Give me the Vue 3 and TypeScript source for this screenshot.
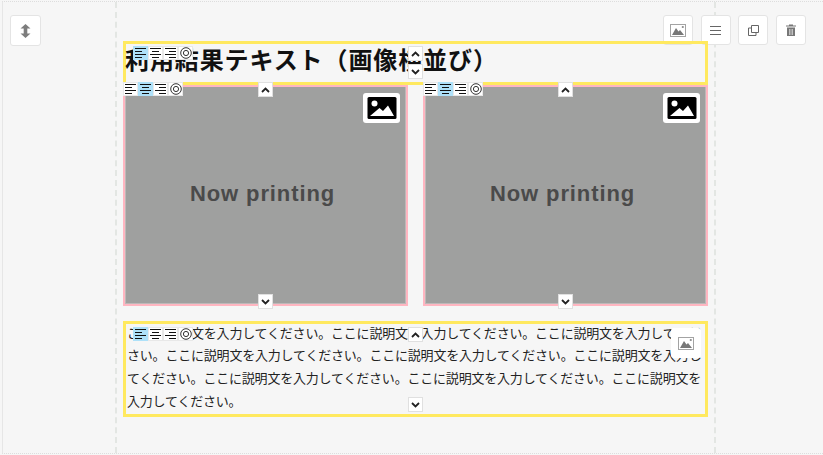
<script setup lang="ts">
const aligns = ['left', 'center', 'right', 'spiral'] as const
const sideTools = ['image', 'menu', 'copy', 'trash'] as const
const bars: Record<string, number[][]> = {
  left: [[1, 11], [1, 7], [1, 11], [1, 7]],
  center: [[1, 11], [3, 7], [1, 11], [3, 7]],
  right: [[1, 11], [5, 7], [1, 11], [5, 7]],
}
const body = 'ここに説明文を入力してください。'.repeat(9)
</script>

<template>
  <div class="page">
    <div class="canvas">
      <button class="tool move-tool" type="button" aria-label="move">
        <svg width="11" height="14" viewBox="0 0 11 14"><path d="M5.500 0 .5 4.500h3.200v5H.5L5.500 14l5-4.500H7.300v-5h3.200z" fill="#7d7d7d" /></svg>
      </button>

      <div class="side-tools">
        <button v-for="t in sideTools" :key="t" class="tool" type="button" :aria-label="t">
          <svg v-if="t === 'image'" width="16" height="13" viewBox="0 0 16 13">
            <rect x="0.500" y="0.500" width="15" height="12" fill="none" stroke="#a3a3a3" />
            <path d="M2 11 6 4l2.500 3.500L10 6l4 5z" fill="#777" /><circle cx="12.800" cy="3" r="1.100" fill="#888" />
          </svg>
          <svg v-else-if="t === 'menu'" width="11" height="9" viewBox="0 0 11 9"><path d="M0 .5h11M0 4.500h11M0 8.500h11" stroke="#666" /></svg>
          <svg v-else-if="t === 'copy'" width="11" height="11" viewBox="0 0 11 11">
            <path d="M3.500.5h7v7h-7z" fill="none" stroke="#666" /><path d="M3 3H.5v7.500H8V8" fill="none" stroke="#666" />
          </svg>
          <svg v-else width="10" height="12" viewBox="0 0 10 12">
            <path d="M0 1.500h10v1H0zM3 .5h4v1H3zM1 3.500h8V12H1z" fill="#777" /><path d="M3.500 5v6M5 5v6M6.500 5v6" stroke="#f5f5f5" stroke-width=".6" />
          </svg>
        </button>
      </div>

      <div class="guide">
        <section class="block title-block">
          <h1 class="title">利用結果テキスト（画像横並び）</h1>
          <div class="aligns title-aligns">
            <span v-for="(a, i) in aligns" :key="a" class="align" :class="{ on: i === 0 }">
              <svg v-if="a !== 'spiral'" width="12" height="10" viewBox="0 0 12 10">
                <rect v-for="(b, r) in bars[a]" :key="r" :x="b[0] - 1" :y="r * 3" :width="b[1]" height="1" fill="#111" />
              </svg>
              <svg v-else width="12" height="12" viewBox="0 0 12 12"><circle cx="6" cy="6" r="5.300" fill="none" stroke="#333" /><circle cx="6" cy="6" r="2.600" fill="none" stroke="#333" /></svg>
            </span>
          </div>
          <span class="arrow title-up"><svg width="9" height="6" viewBox="0 0 9 6"><path d="M1 5l3.500-3.500L8 5" fill="none" stroke="#222" stroke-width="1.800" /></svg></span>
          <span class="arrow title-down"><svg width="9" height="6" viewBox="0 0 9 6"><path d="M1 1l3.500 3.500L8 1" fill="none" stroke="#222" stroke-width="1.800" /></svg></span>
        </section>

        <div class="images">
          <figure v-for="n in 2" :key="n" class="image">
            <div class="placeholder">Now printing</div>
            <div class="aligns image-aligns">
              <span v-for="(a, i) in aligns" :key="a" class="align" :class="{ on: i === 1 }">
                <svg v-if="a !== 'spiral'" width="12" height="10" viewBox="0 0 12 10">
                  <rect v-for="(b, r) in bars[a]" :key="r" :x="b[0] - 1" :y="r * 3" :width="b[1]" height="1" fill="#111" />
                </svg>
                <svg v-else width="12" height="12" viewBox="0 0 12 12"><circle cx="6" cy="6" r="5.300" fill="none" stroke="#333" /><circle cx="6" cy="6" r="2.600" fill="none" stroke="#333" /></svg>
              </span>
            </div>
            <span class="arrow image-up"><svg width="9" height="6" viewBox="0 0 9 6"><path d="M1 5l3.500-3.500L8 5" fill="none" stroke="#222" stroke-width="1.800" /></svg></span>
            <span class="arrow image-down"><svg width="9" height="6" viewBox="0 0 9 6"><path d="M1 1l3.500 3.500L8 1" fill="none" stroke="#222" stroke-width="1.800" /></svg></span>
            <span class="swap">
              <svg width="30" height="24" viewBox="0 0 30 24">
                <rect x="0.500" y="1" width="29" height="22" rx="1.500" fill="#000" />
                <circle cx="7.500" cy="7.500" r="3" fill="#fff" />
                <path d="M3 20 12.500 12l3.500 3 5-5.500L27 20z" fill="#fff" />
              </svg>
            </span>
          </figure>
        </div>

        <section class="block text-block">
          <p class="body">{{ body }}</p>
          <div class="aligns text-aligns">
            <span v-for="(a, i) in aligns" :key="a" class="align" :class="{ on: i === 0 }">
              <svg v-if="a !== 'spiral'" width="12" height="10" viewBox="0 0 12 10">
                <rect v-for="(b, r) in bars[a]" :key="r" :x="b[0] - 1" :y="r * 3" :width="b[1]" height="1" fill="#111" />
              </svg>
              <svg v-else width="12" height="12" viewBox="0 0 12 12"><circle cx="6" cy="6" r="5.300" fill="none" stroke="#333" /><circle cx="6" cy="6" r="2.600" fill="none" stroke="#333" /></svg>
            </span>
          </div>
          <span class="arrow text-up"><svg width="9" height="6" viewBox="0 0 9 6"><path d="M1 5l3.500-3.500L8 5" fill="none" stroke="#222" stroke-width="1.800" /></svg></span>
          <span class="arrow text-down"><svg width="9" height="6" viewBox="0 0 9 6"><path d="M1 1l3.500 3.500L8 1" fill="none" stroke="#222" stroke-width="1.800" /></svg></span>
          <button class="tool text-image" type="button" aria-label="image">
            <svg width="16" height="13" viewBox="0 0 16 13">
              <rect x="0.500" y="0.500" width="15" height="12" fill="none" stroke="#a3a3a3" />
              <path d="M2 11 6 4l2.500 3.500L10 6l4 5z" fill="#777" /><circle cx="12.800" cy="3" r="1.100" fill="#888" />
            </svg>
          </button>
        </section>
      </div>
    </div>
  </div>
</template>

<style scoped>
.page {
  box-sizing: border-box;
  width: 823px;
  height: 455px;
  padding: 1px 0 0 2px;
  background: #f6f6f6;
  font-family: "Liberation Sans", "Noto Sans CJK JP", sans-serif;
  overflow: hidden;
}
.canvas {
  position: relative;
  box-sizing: border-box;
  width: 821px;
  height: 453px;
  padding: 0 0 0 112px;
  background: #f6f6f6;
  border-left: 1px solid #e6e6e6;
  border-top: 1px dotted #ddd;
  border-bottom: 1px dotted #ddd;
}
.guide {
  box-sizing: border-box;
  width: 601px;
  height: 100%;
  padding: 39px 6px 0 6px;
  border-left: 2px dashed #e3e6e3;
  border-right: 2px dashed #e3e6e3;
}
.tool {
  display: flex;
  align-items: center;
  justify-content: center;
  box-sizing: border-box;
  width: 30px;
  height: 30px;
  padding: 0;
  background: #fff;
  border: 1px solid #e4e4e4;
  border-radius: 3px;
}
.move-tool {
  position: absolute;
  top: 13px;
  left: 7px;
  width: 31px;
  height: 31px;
}
.side-tools {
  position: absolute;
  top: 13px;
  left: 660px;
  display: flex;
  gap: 7.5px;
}
.block {
  position: relative;
  box-sizing: border-box;
  width: 585px;
  border: 3px solid #ffe95f;
}
.title-block {
  height: 44px;
}
.title {
  margin: 0 0 0 -1px;
  padding: 1px 0 0 0;
  font-size: 24px;
  line-height: 32px;
  font-weight: 700;
  color: #111;
  letter-spacing: 0.9px;
  white-space: nowrap;
}
.images {
  display: flex;
  gap: 15px;
}
.image {
  position: relative;
  box-sizing: border-box;
  width: 285px;
  height: 221px;
  margin: 0;
  border: 2px solid #ffb6c1;
}
.placeholder {
  display: flex;
  align-items: center;
  justify-content: center;
  box-sizing: border-box;
  height: 100%;
  padding: 0 6px 2px 0;
  background: #9fa09f;
  border: 1px solid #bdb9b9;
  border-top: 0;
  color: #4a4a4a;
  font-size: 22px;
  font-weight: 700;
  letter-spacing: 0.9px;
}
.text-block {
  height: 96px;
  margin-top: 15px;
}
.body {
  margin: -1.500px 0 0;
  padding: 0 0 0 1px;
  font-size: 13px;
  line-height: 22.800px;
  letter-spacing: -0.2px;
  color: #222;
}
.aligns {
  position: absolute;
  display: flex;
}
.align {
  display: flex;
  align-items: center;
  justify-content: center;
  box-sizing: border-box;
  width: 15px;
  height: 14px;
  background: #fff;
  border: 1px solid #e8e8e8;
}
.align.on {
  background: #aee1f9;
  border-color: #aee1f9;
}
.title-aligns {
  top: 2px;
  left: 7px;
}
.image-aligns {
  top: -5px;
  left: -2px;
}
.text-aligns {
  top: 3px;
  left: 7px;
}
.arrow {
  position: absolute;
  display: flex;
  align-items: center;
  justify-content: center;
  box-sizing: border-box;
  width: 15px;
  height: 15px;
  background: #fff;
  border: 1px solid #e0e0e0;
}
.title-up {
  top: 2px;
  left: 282px;
}
.title-down {
  top: 20px;
  left: 282px;
}
.image-up {
  top: -5px;
  left: 133px;
}
.image-down {
  bottom: -5px;
  left: 133px;
}
.text-up {
  top: 3px;
  left: 282px;
}
.text-down {
  bottom: 2px;
  left: 282px;
}
.swap {
  position: absolute;
  top: 6px;
  right: 6px;
  display: flex;
  align-items: center;
  justify-content: center;
  width: 37px;
  height: 30px;
  background: #fff;
  border-radius: 3px;
}
.text-image {
  position: absolute;
  top: 4px;
  right: 4px;
  border: 0;
}
</style>
